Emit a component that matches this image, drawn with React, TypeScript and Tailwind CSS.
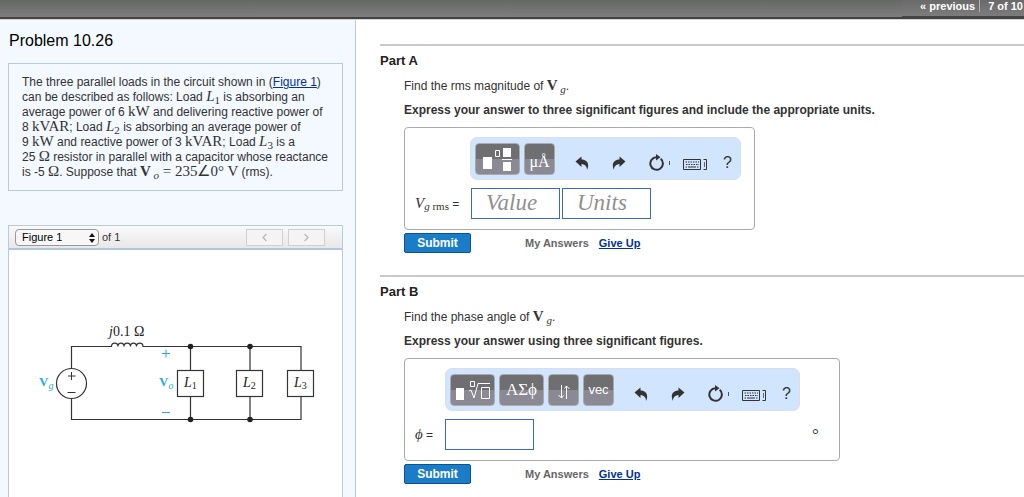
import type { ReactNode } from 'react';
import { FaChevronLeft, FaChevronRight } from 'react-icons/fa';

function M({ children }: { children: ReactNode }) {
  return <span className="font-['Liberation_Serif',serif] text-[15px] leading-[0] whitespace-nowrap">{children}</span>;
}

function Sub({ children }: { children: ReactNode }) {
  return <sub className="text-[11px] leading-[0]">{children}</sub>;
}

function TopBar() {
  return (
    <header className="flex h-5 justify-end border-b border-[#d4d4d4] bg-linear-to-b from-[#666866] to-[#808080]">
      <div className="flex-1 border-b-2 border-[#444]" />
      <nav className="flex h-[19px] items-start border-b-3 border-[#444] bg-linear-to-b from-[#6a6a6a] to-[#7c7c7c] pr-px pl-[18px] text-[11px] leading-[13px] font-bold text-white">
        <a href="#previous">« previous</a>
        <span className="ml-1 h-3 border-l border-[#b0b0b0] pl-2">7 of 10</span>
      </nav>
    </header>
  );
}

function Circuit() {
  const loads = [
    { x: 191, label: '1' },
    { x: 250, label: '2' },
    { x: 301, label: '3' },
  ];
  return (
    <svg viewBox="20 310 320 130" className="mt-[61px] ml-[11px] w-80 font-['Liberation_Serif',serif]" role="img" aria-label="Circuit with three parallel loads">
      <g fill="none" stroke="#333" strokeWidth="1.2">
        <path d="M71.5 367V345.5H111.5C111.5 341 118 341 118 345.5C118 341 124 341 124 345.5C124 341 130.5 341 130.5 345.5C130.5 341 136.5 341 136.5 345.5C136.5 341 143 341 143 345.5H301V418.5H71.5V398" />
        <path d="M190.5 345.5V418.5M250 345.5V418.5" />
        <circle cx="71.5" cy="382.5" r="15" fill="#fff" />
        <path d="M68 375H75.5M71.5 371V379M67.5 391.5H75.5" strokeWidth="1" />
      </g>
      {loads.map((load) => (
        <g key={load.label}>
          <rect x={load.x - 13.5} y="369.5" width="26" height="26" fill="#fff" stroke="#333" strokeWidth="1.2" />
          <text x={load.x - 7} y="386" fontSize="14" fontStyle="italic" fill="#222">
            L<tspan fontSize="10" fontStyle="normal" dy="2">{load.label}</tspan>
          </text>
        </g>
      ))}
      <g fill="#222">
        <circle cx="190.5" cy="345.5" r="2.8" />
        <circle cx="250" cy="345.5" r="2.8" />
        <circle cx="190.5" cy="418.5" r="2.8" />
        <circle cx="250" cy="418.5" r="2.8" />
      </g>
      <text x="109" y="335" fontSize="14" fill="#222">
        <tspan fontStyle="italic">j</tspan>0.1 Ω
      </text>
      <path d="M162 352.5H170M166 348.5V356.5M162 411.5H170" stroke="#29abe2" strokeWidth="1" />
      <g fill="#29abe2" fontSize="13" fontWeight="bold">
        <text x="39" y="385">
          V<tspan fontSize="10" fontStyle="italic" fontWeight="normal" dy="3">g</tspan>
        </text>
        <text x="159" y="385">
          V<tspan fontSize="10" fontStyle="italic" fontWeight="normal" dy="3">o</tspan>
        </text>
      </g>
    </svg>
  );
}

function FigurePanel() {
  return (
    <section className="mt-[34px] flex-1 border border-b-0 border-[#b8cadb] bg-white">
      <div className="flex h-6 items-center border-b-2 border-[#b3c7d8] bg-linear-to-b from-[#f9f9f9] to-[#e8e8e8] pr-[17px] pl-1.5">
        <div className="relative">
          <select aria-label="Figure" className="block h-[17px] w-[84px] appearance-none rounded-[4px] border border-[#999] bg-[#f7f7f7] pl-1.5 text-[11px] leading-[15px] text-black">
            <option>Figure 1</option>
          </select>
          <svg viewBox="0 0 6 10" className="pointer-events-none absolute top-1 right-1 h-2.5 w-1.5">
            <path d="M3 0L6 4H0ZM3 10L0 6H6Z" fill="#111" />
          </svg>
        </div>
        <span className="ml-[3px] flex-1 text-[11px] text-[#333]">of 1</span>
        <button aria-label="Previous figure" className="flex h-[17px] w-[37px] items-center justify-center border border-[#d0d0d0] bg-[#f4f4f4] text-[#bbb]">
          <FaChevronLeft size={9} />
        </button>
        <button aria-label="Next figure" className="ml-[5px] flex h-[17px] w-[37px] items-center justify-center border border-[#d0d0d0] bg-[#f4f4f4] text-[#bbb]">
          <FaChevronRight size={9} />
        </button>
      </div>
      <Circuit />
    </section>
  );
}

function ProblemPanel() {
  return (
    <aside className="flex w-[356px] shrink-0 flex-col border-r border-[#b8cadb] bg-[#f4f8ff] pr-3 pl-2">
      <h1 className="pt-[9px] pl-px text-[16px] leading-6 text-black">Problem 10.26</h1>
      <div className="mt-2.5 border border-[#b8cadb] pt-[11px] pb-2.5 pl-[13px] text-[12px] leading-[15px] text-[#333]">
        <p>
          The three parallel loads in the circuit shown in (
          <a href="#figure" className="text-[#039] underline">Figure 1</a>)<br />
          can be described as follows: Load <M><i>L</i><Sub>1</Sub></M> is absorbing an<br />
          average power of 6 <M>kW</M> and delivering reactive power of<br />
          8 <M>kVAR</M>; Load <M><i>L</i><Sub>2</Sub></M> is absorbing an average power of<br />
          9 <M>kW</M> and reactive power of 3 <M>kVAR</M>; Load <M><i>L</i><Sub>3</Sub></M> is a<br />
          25 <M>Ω</M> resistor in parallel with a capacitor whose reactance<br />
          is -5 <M>Ω</M>. Suppose that <M><b>V</b><Sub><i> o</i></Sub> = 235∠0° V</M> (rms).
        </p>
      </div>
      <FigurePanel />
    </aside>
  );
}

function ToolButton({ label, wide, children }: { label: string; wide?: boolean; children: ReactNode }) {
  return (
    <button
      aria-label={label}
      className={`flex h-8 items-center justify-center rounded-[4px] border border-[#aaa] bg-linear-to-b from-[#6f6f72] from-50% to-[#8b8a94] to-50% text-white ${wide ? 'w-[45px]' : 'w-[31px]'}`}
    >
      {children}
    </button>
  );
}

function UndoIcon({ flip }: { flip?: boolean }) {
  return (
    <svg viewBox="0 0 14 14" className={flip ? 'h-3.5 w-3.5 -scale-x-100' : 'h-3.5 w-3.5'}>
      <path d="M.5 5.5L6.5 .5V3.5C12 3.5 15 8 12 14C12 10.5 10.5 8.5 6.5 8V11Z" fill="#333" />
    </svg>
  );
}

function Toolbar({ children }: { children: ReactNode }) {
  return (
    <div className="flex h-[43px] items-center rounded-[7px] border border-[#d8dfe8] bg-[#d1e5fe] pr-2 pl-1">
      <div className="flex gap-1">{children}</div>
      <div className="ml-5 flex items-center pt-2">
        <button aria-label="Undo"><UndoIcon /></button>
        <button aria-label="Redo" className="ml-[23px]"><UndoIcon flip /></button>
        <button aria-label="Reset" className="ml-[23px]">
          <svg viewBox="0 0 21 17" className="h-[17px] w-[21px]">
            <path d="M11.7 4.7A6.3 6.3 0 1 1 7.5 3.2" fill="none" stroke="#333" strokeWidth="2" />
            <path d="M7 0L11.5 3.3L7 6.5Z" fill="#333" />
            <path d="M20.5 7V11" stroke="#456" />
          </svg>
        </button>
        <button aria-label="Keyboard shortcuts" className="ml-[13px]">
          <svg viewBox="0 0 24 11" className="mt-1 h-[11px] w-6" fill="none" stroke="#333">
            <path d="M.5 .5H17.5V10.5H.5ZM20.5 .5H23.5V10.5H20.5" />
            <path d="M21.5 3V8" stroke="#666" />
            <path d="M2.5 3H16M3 5.5H16M2.5 8H4M14 8H16" strokeDasharray="1.5 1" />
            <path d="M5 8H13" />
          </svg>
        </button>
        <button aria-label="Help" className="ml-4 text-[16px] leading-4 text-[#333]">?</button>
      </div>
    </div>
  );
}

function Part({ title, question, instruction, children }: { title: string; question: string; instruction: string; children: ReactNode }) {
  return (
    <section className="mb-[22px] border-t-2 border-[#c9c9c9] pt-[5px]">
      <h2 className="text-[13px] leading-5 font-bold text-[#222]">{title}</h2>
      <div className="pl-6 text-[12px] text-[#333]">
        <p className="mt-[5px] h-5 leading-5">
          {question} <M><b>V</b><Sub><i> g</i></Sub></M>.
        </p>
        <p className="mt-1 mb-[7px] leading-5 font-bold">{instruction}</p>
        {children}
        <div className="mt-[3px] flex items-center">
          <button className="h-5 w-[67px] rounded-[2px] border border-[#0a5590] bg-[#1b7dc8] text-[12px] leading-[18px] font-bold text-white">Submit</button>
          <span className="ml-[54px] text-[11px] font-bold text-[#666]">My Answers</span>
          <a href="#give-up" className="ml-2.5 text-[11px] font-bold text-[#039] underline">Give Up</a>
        </div>
      </div>
    </section>
  );
}

const field = "h-[31px] w-[89px] border border-[#3a68cc] bg-white px-3.5 font-['Liberation_Serif',serif] text-[23px] italic text-[#333] placeholder:text-[#909090] outline-none";

export default function App() {
  return (
    <div className="flex min-h-screen flex-col bg-white font-['Liberation_Sans',Arial,sans-serif]">
      <TopBar />
      <div className="flex flex-1">
        <ProblemPanel />
        <main className="min-w-0 flex-1 pt-6 pl-6">
          <Part
            title="Part A"
            question="Find the rms magnitude of"
            instruction="Express your answer to three significant figures and include the appropriate units."
          >
            <div className="w-fit rounded-[4px] border border-[#aaa] pt-[9px] pr-[13px] pb-2.5 pl-2.5">
              <div className="ml-[55px]">
                <Toolbar>
                  <ToolButton label="Templates" wide>
                    <svg viewBox="0 0 29 24" className="h-6 w-[29px]" fill="#fff">
                      <path d="M0 10H9V22H0ZM20 1H28V10H20ZM20 15H28V24H20ZM19 12H29V13H19Z" />
                      <path d="M12.5 3.5H16.5V9.5H12.5Z" fill="none" stroke="#fff" />
                    </svg>
                  </ToolButton>
                  <ToolButton label="Units symbols">
                    <span className="pt-1.5 font-['Liberation_Serif',serif] text-[16px] leading-none">μÅ</span>
                  </ToolButton>
                </Toolbar>
              </div>
              <div className="mt-2 flex items-center">
                <label htmlFor="value" className="w-14 whitespace-nowrap">
                  <M><i>V</i><Sub><i>g</i> rms</Sub></M> =
                </label>
                <input id="value" placeholder="Value" className={field} />
                <input aria-label="Units" placeholder="Units" className={`${field} ml-0.5`} />
              </div>
            </div>
          </Part>
          <Part
            title="Part B"
            question="Find the phase angle of"
            instruction="Express your answer using three significant figures."
          >
            <div className="w-fit rounded-[4px] border border-[#aaa] pt-[9px] pb-2.5 pl-2.5">
              <div className="mr-[39px] ml-[30px]">
                <Toolbar>
                  <ToolButton label="Roots" wide>
                    <svg viewBox="0 0 35 22" className="h-[22px] w-[35px]" fill="none" stroke="#fff">
                      <path d="M1 9H9V21H1Z" fill="#fff" stroke="none" />
                      <path d="M15.5 2.5H19.5V7.5H15.5ZM26.5 8.5H34.5V19.5H26.5Z" />
                      <path d="M14 12L16 11L19 19L23 4.5H35" />
                    </svg>
                  </ToolButton>
                  <ToolButton label="Greek letters" wide>
                    <span className="font-['Liberation_Serif',serif] text-[17px] leading-none">ΑΣϕ</span>
                  </ToolButton>
                  <ToolButton label="Arrows">
                    <svg viewBox="0 0 12 14" className="mt-1 h-3.5 w-3" fill="none" stroke="#fff">
                      <path d="M3.5 0V13M.5 10L3.5 13L5.5 10.5M8.5 14V1M6.5 3.5L8.5 1L11.5 4" />
                    </svg>
                  </ToolButton>
                  <ToolButton label="Vector"><span className="text-[13px]">vec</span></ToolButton>
                </Toolbar>
              </div>
              <div className="mt-2 flex items-center pr-5">
                <label htmlFor="phase" className="w-[30px] whitespace-nowrap"><M><i>ϕ</i></M> =</label>
                <input id="phase" className={field} />
                <span className="ml-auto font-['Liberation_Serif',serif] text-[17px] leading-4">°</span>
              </div>
            </div>
          </Part>
        </main>
      </div>
    </div>
  );
}
